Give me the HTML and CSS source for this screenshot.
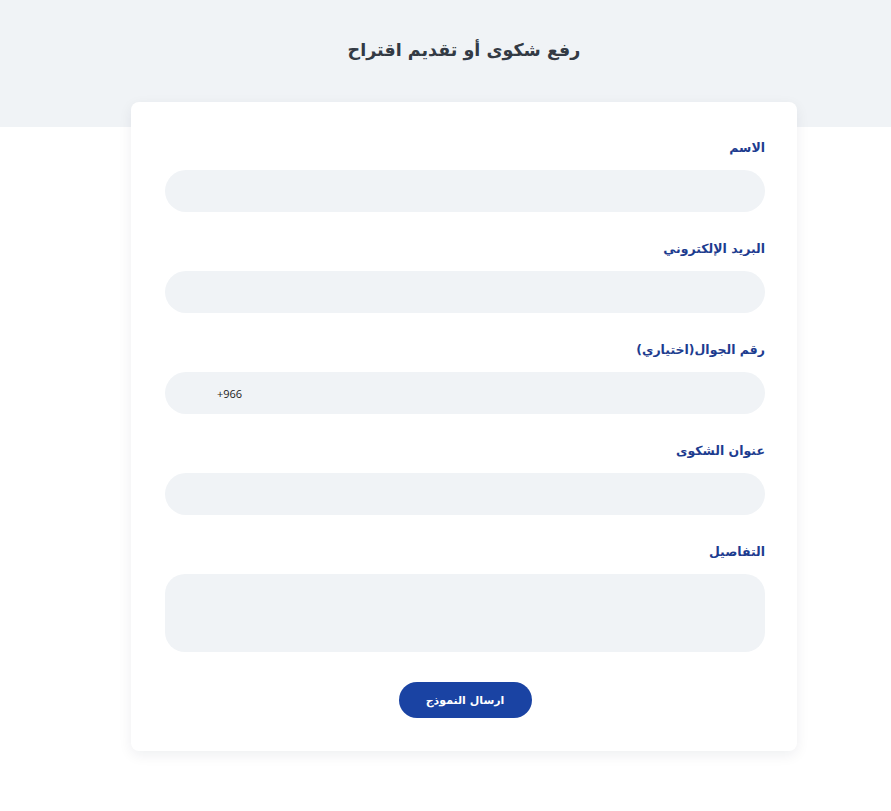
FILE: index.html
```html
<!DOCTYPE html>
<html lang="ar" dir="rtl">
<head>
<meta charset="utf-8">
<title>رفع شكوى أو تقديم اقتراح</title>
<link rel="stylesheet" href="styles.css">
</head>
<body>
<header class="hero">
  <div class="shell">
    <h1 class="hero-title">رفع شكوى أو تقديم اقتراح</h1>
  </div>
</header>
<div class="shell">
<main class="card">
  <form class="form">
    <div class="field">
      <label class="label">الاسم</label>
      <input class="input" type="text">
    </div>
    <div class="field">
      <label class="label">البريد الإلكتروني</label>
      <input class="input" type="email">
    </div>
    <div class="field">
      <label class="label">رقم الجوال(اختياري)</label>
      <div class="input phone"><span class="code">+966</span></div>
    </div>
    <div class="field">
      <label class="label">عنوان الشكوى</label>
      <input class="input" type="text">
    </div>
    <div class="field">
      <label class="label">التفاصيل</label>
      <textarea class="input textarea"></textarea>
    </div>
    <div class="actions">
      <button class="submit" type="button">ارسال النموذج</button>
    </div>
  </form>
</main>
</div>
</body>
</html>
```

FILE: styles.css
```css
* { box-sizing: border-box; }
html, body { margin: 0; padding: 0; background: #ffffff; }
body {
  font-family: "DejaVu Sans", "Noto Sans", sans-serif;
  color: #333;
}
.shell {
  padding-left: 37px;
}
.hero {
  background: #f0f3f6;
  height: 127px;
  padding-top: 36px;
}
.hero .shell {
  display: flex;
  justify-content: center;
}
.hero-title {
  margin: 0;
  font-size: 17.5px;
  font-weight: 700;
  color: #333a44;
  line-height: 28px;
}
.card {
  width: 666px;
  margin: -25px auto 40px;
  background: #fff;
  border-radius: 8px;
  box-shadow: 0 4px 14px rgba(20, 30, 60, 0.07);
  padding: 36px 32px 33px 34px;
}
.form { display: flex; flex-direction: column; }
.field {
  display: flex;
  flex-direction: column;
  gap: 12px;
  margin-bottom: 27px;
}
.label {
  font-size: 12.5px;
  font-weight: 700;
  color: #1d3c8f;
  line-height: 20px;
}
.input {
  display: block;
  width: 100%;
  height: 42px;
  border: none;
  outline: none;
  border-radius: 21px;
  background: #f0f3f6;
  font-family: inherit;
  padding: 0 20px;
}
.phone {
  direction: ltr;
  display: flex;
  align-items: center;
  padding-left: 52px;
}
.code {
  font-family: "Open Sans", "DejaVu Sans", sans-serif;
  font-size: 11px;
  color: #222;
}
.textarea {
  height: 78px;
  border-radius: 20px;
  resize: none;
}
.actions {
  display: flex;
  justify-content: center;
  margin-top: 3px;
}
.submit {
  width: 133px;
  height: 36px;
  border: none;
  border-radius: 18px;
  background: #1a43a3;
  color: #fff;
  font-family: inherit;
  font-weight: 700;
  font-size: 11px;
}
```
